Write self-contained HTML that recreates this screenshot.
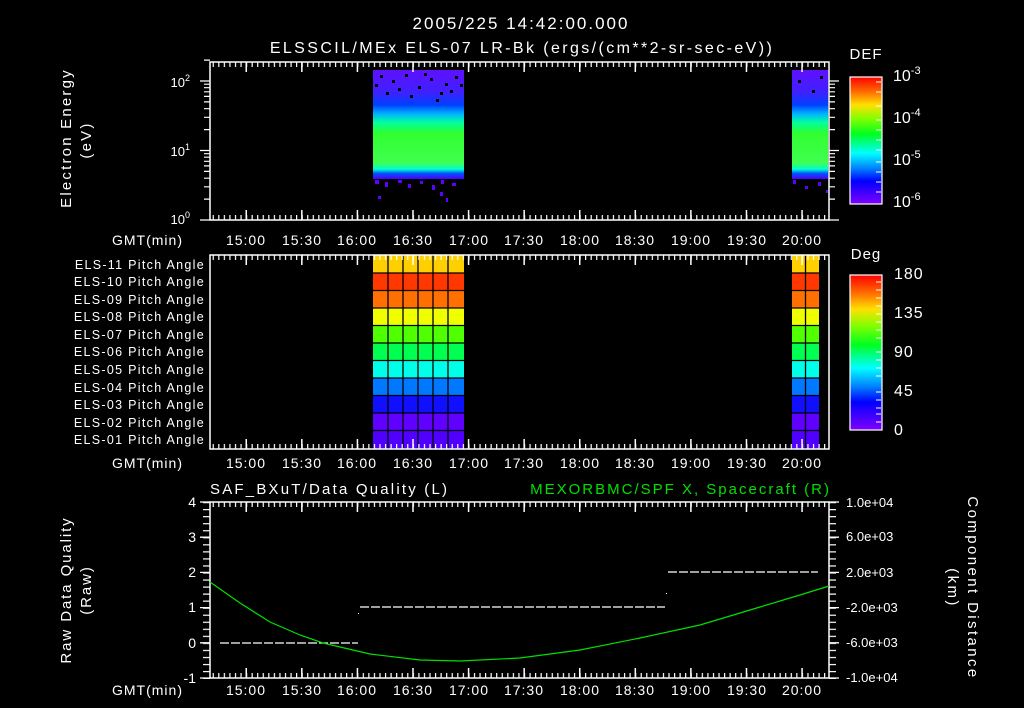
<!DOCTYPE html>
<html><head><meta charset="utf-8"><style>
html,body{margin:0;padding:0;background:#000;width:1024px;height:708px;overflow:hidden}
svg{display:block}
text{font-family:"Liberation Sans",sans-serif;fill:#fff}
</style></head><body>
<svg width="1024" height="708" viewBox="0 0 1024 708" xmlns="http://www.w3.org/2000/svg">
<defs>
<pattern id="mn" patternUnits="userSpaceOnUse" x="246" y="0" width="5.558" height="708"><rect width="1.2" height="708" fill="#fff"/></pattern>
<pattern id="mj" patternUnits="userSpaceOnUse" x="245.5" y="0" width="55.58" height="708"><rect width="1.5" height="708" fill="#fff"/></pattern>
<pattern id="yt" patternUnits="userSpaceOnUse" x="0" y="502" width="1024" height="7.04"><rect width="1024" height="1.2" fill="#fff"/></pattern>
<linearGradient id="spec" x1="0" y1="0" x2="0" y2="1">
<stop offset="0" stop-color="#6010ff"/><stop offset="0.2" stop-color="#4020ff"/>
<stop offset="0.32" stop-color="#0040ff"/><stop offset="0.4" stop-color="#00b0ff"/>
<stop offset="0.48" stop-color="#00ffa0"/><stop offset="0.58" stop-color="#30ff30"/>
<stop offset="0.85" stop-color="#40ff50"/><stop offset="0.91" stop-color="#00ffd0"/>
<stop offset="0.95" stop-color="#0050ff"/><stop offset="1" stop-color="#5000ff"/>
</linearGradient>
<linearGradient id="cb" x1="0" y1="0" x2="0" y2="1">
<stop offset="0" stop-color="#ff0000"/><stop offset="0.12" stop-color="#ff7000"/>
<stop offset="0.22" stop-color="#ffe000"/><stop offset="0.33" stop-color="#80ff00"/>
<stop offset="0.45" stop-color="#00ff20"/><stop offset="0.6" stop-color="#00ffff"/>
<stop offset="0.72" stop-color="#0080ff"/><stop offset="0.82" stop-color="#0000ff"/>
<stop offset="1" stop-color="#8000ff"/>
</linearGradient>
</defs>

<!-- titles -->
<text x="521" y="29" font-size="17" letter-spacing="2" text-anchor="middle">2005/225 14:42:00.000</text>
<text x="522" y="53" font-size="16" letter-spacing="2.4" text-anchor="middle">ELSSCIL/MEx ELS-07 LR-Bk  (ergs/(cm**2-sr-sec-eV))</text>

<!-- PANEL 1 -->
<rect x="373" y="70" width="91" height="109" fill="url(#spec)"/>
<rect x="792" y="70" width="36" height="109" fill="url(#spec)"/>
<g fill="#000">
<rect x="380" y="75" width="3" height="3"/><rect x="392" y="80" width="3" height="3"/><rect x="405" y="74" width="3" height="3"/><rect x="418" y="86" width="3" height="3"/><rect x="430" y="78" width="3" height="3"/><rect x="445" y="83" width="3" height="3"/><rect x="455" y="76" width="3" height="3"/><rect x="386" y="92" width="3" height="3"/><rect x="410" y="95" width="3" height="3"/><rect x="440" y="92" width="3" height="3"/><rect x="375" y="84" width="3" height="3"/><rect x="398" y="88" width="3" height="3"/><rect x="424" y="73" width="3" height="3"/><rect x="436" y="99" width="3" height="3"/><rect x="450" y="90" width="3" height="3"/><rect x="460" y="84" width="3" height="3"/><rect x="798" y="80" width="3" height="3"/><rect x="812" y="90" width="3" height="3"/><rect x="820" y="76" width="3" height="3"/>
</g>
<g fill="#6000ff">
<rect x="375" y="180" width="4" height="4"/><rect x="385" y="182" width="3" height="5"/><rect x="398" y="180" width="4" height="3"/><rect x="408" y="184" width="3" height="4"/><rect x="420" y="181" width="3" height="3"/><rect x="432" y="185" width="3" height="5"/><rect x="441" y="180" width="3" height="4"/><rect x="452" y="183" width="4" height="3"/><rect x="378" y="196" width="3" height="3"/><rect x="440" y="192" width="3" height="4"/><rect x="446" y="198" width="2" height="4"/><rect x="793" y="180" width="3" height="4"/><rect x="805" y="186" width="3" height="3"/><rect x="818" y="182" width="3" height="4"/><rect x="826" y="190" width="2" height="3"/>
</g>
<rect x="210" y="62" width="619" height="158" fill="none" stroke="#fff" stroke-width="1.5"/>
<rect x="210" y="62" width="619" height="5" fill="url(#mn)"/>
<rect x="210" y="62" width="619" height="10" fill="url(#mj)"/>
<rect x="210" y="215" width="619" height="5" fill="url(#mn)"/>
<rect x="210" y="210" width="619" height="10" fill="url(#mj)"/>
<g stroke="#fff" stroke-width="1.2">
<path d="M200 81H210M200 150.5H210M200 220H210"/>
<path d="M204 199.1H210M204 186.8H210M204 178.2H210M204 171.4H210M204 165.9H210M204 161.3H210M204 157.2H210M204 153.7H210M204 129.6H210M204 117.3H210M204 108.7H210M204 101.9H210M204 96.4H210M204 91.8H210M204 87.7H210M204 84.2H210M204 60.1H210"/>
<path d="M829 81H839M829 150.5H839M829 220H839"/>
<path d="M829 199.1H835M829 186.8H835M829 178.2H835M829 171.4H835M829 165.9H835M829 161.3H835M829 157.2H835M829 153.7H835M829 129.6H835M829 117.3H835M829 108.7H835M829 101.9H835M829 96.4H835M829 91.8H835M829 87.7H835M829 84.2H835"/>
</g>
<g font-size="13" text-anchor="end">
<text x="190" y="87">10<tspan font-size="9" dy="-6">2</tspan></text>
<text x="190" y="156">10<tspan font-size="9" dy="-6">1</tspan></text>
<text x="190" y="224">10<tspan font-size="9" dy="-6">0</tspan></text>
</g>
<text transform="translate(71,138) rotate(-90)" font-size="15" letter-spacing="2.2" text-anchor="middle">Electron Energy</text>
<text transform="translate(91,140) rotate(-90)" font-size="15" letter-spacing="2.2" text-anchor="middle">(eV)</text>
<g font-size="14" letter-spacing="1" text-anchor="middle">
<text x="183" y="245" text-anchor="end">GMT(min)</text>
<text x="246" y="245">15:00</text><text x="302" y="245">15:30</text><text x="357" y="245">16:00</text><text x="413" y="245">16:30</text><text x="469" y="245">17:00</text><text x="524" y="245">17:30</text><text x="580" y="245">18:00</text><text x="635" y="245">18:30</text><text x="691" y="245">19:00</text><text x="747" y="245">19:30</text><text x="802" y="245">20:00</text>
</g>
<!-- colorbar 1 -->
<text x="866" y="59" font-size="15" letter-spacing="1" text-anchor="middle">DEF</text>
<rect x="850" y="77" width="32" height="127" fill="url(#cb)" stroke="#fff" stroke-width="1.2"/>
<g stroke="#fff"><path d="M876 82H881M876 92H881M876 106H881M876 120H881M876 130H881M876 140H881M876 150H881M876 162H881M876 172H881M876 182H881M876 192H881"/></g>
<g font-size="16">
<text x="893" y="81">10<tspan font-size="11" dy="-7">-3</tspan></text>
<text x="893" y="123">10<tspan font-size="11" dy="-7">-4</tspan></text>
<text x="893" y="165">10<tspan font-size="11" dy="-7">-5</tspan></text>
<text x="893" y="207">10<tspan font-size="11" dy="-7">-6</tspan></text>
</g>

<!-- PANEL 2 -->
<g>
<rect x="373" y="255" width="91" height="18" fill="#ffd000"/>
<rect x="373" y="273" width="91" height="17.6" fill="#ff3800"/>
<rect x="373" y="290.5" width="91" height="17.6" fill="#ff7000"/>
<rect x="373" y="308" width="91" height="17.6" fill="#f0ff00"/>
<rect x="373" y="325.5" width="91" height="17.6" fill="#50ff00"/>
<rect x="373" y="343" width="91" height="17.6" fill="#00ff50"/>
<rect x="373" y="360.5" width="91" height="17.6" fill="#00ffe8"/>
<rect x="373" y="378" width="91" height="17.6" fill="#0078ff"/>
<rect x="373" y="395.5" width="91" height="17.6" fill="#1010ff"/>
<rect x="373" y="413" width="91" height="17.6" fill="#6000ff"/>
<rect x="373" y="430.5" width="91" height="18.5" fill="#5000ff"/>
</g>
<g>
<rect x="792" y="255" width="27" height="18" fill="#ffd000"/>
<rect x="792" y="273" width="27" height="17.6" fill="#ff3800"/>
<rect x="792" y="290.5" width="27" height="17.6" fill="#ff7000"/>
<rect x="792" y="308" width="27" height="17.6" fill="#f0ff00"/>
<rect x="792" y="325.5" width="27" height="17.6" fill="#50ff00"/>
<rect x="792" y="343" width="27" height="17.6" fill="#00ff50"/>
<rect x="792" y="360.5" width="27" height="17.6" fill="#00ffe8"/>
<rect x="792" y="378" width="27" height="17.6" fill="#0078ff"/>
<rect x="792" y="395.5" width="27" height="17.6" fill="#1010ff"/>
<rect x="792" y="413" width="27" height="17.6" fill="#6000ff"/>
<rect x="792" y="430.5" width="27" height="18.5" fill="#5000ff"/>
</g>
<g stroke="#000" stroke-width="1.3">
<path d="M373 273H464M373 290.5H464M373 308H464M373 325.5H464M373 343H464M373 360.5H464M373 378H464M373 395.5H464M373 413H464M373 430.5H464"/>
<path d="M388 255V449M403 255V449M418 255V449M433 255V449M448 255V449"/>
<path d="M792 273H819M792 290.5H819M792 308H819M792 325.5H819M792 343H819M792 360.5H819M792 378H819M792 395.5H819M792 413H819M792 430.5H819M805.5 255V449"/>
</g>
<rect x="210" y="255" width="619" height="194" fill="none" stroke="#fff" stroke-width="1.5"/>
<rect x="210" y="255" width="619" height="5" fill="url(#mn)"/>
<rect x="210" y="255" width="619" height="10" fill="url(#mj)"/>
<rect x="210" y="444" width="619" height="5" fill="url(#mn)"/>
<rect x="210" y="439" width="619" height="10" fill="url(#mj)"/>
<g font-size="12.5" letter-spacing="1.3" text-anchor="end">
<text x="205" y="269">ELS-11 Pitch Angle</text>
<text x="205" y="286">ELS-10 Pitch Angle</text>
<text x="205" y="304">ELS-09 Pitch Angle</text>
<text x="205" y="321">ELS-08 Pitch Angle</text>
<text x="205" y="339">ELS-07 Pitch Angle</text>
<text x="205" y="356">ELS-06 Pitch Angle</text>
<text x="205" y="374">ELS-05 Pitch Angle</text>
<text x="205" y="392">ELS-04 Pitch Angle</text>
<text x="205" y="409">ELS-03 Pitch Angle</text>
<text x="205" y="427">ELS-02 Pitch Angle</text>
<text x="205" y="444">ELS-01 Pitch Angle</text>
</g>
<g font-size="14" letter-spacing="1" text-anchor="middle">
<text x="183" y="468" text-anchor="end">GMT(min)</text>
<text x="246" y="468">15:00</text><text x="302" y="468">15:30</text><text x="357" y="468">16:00</text><text x="413" y="468">16:30</text><text x="469" y="468">17:00</text><text x="524" y="468">17:30</text><text x="580" y="468">18:00</text><text x="635" y="468">18:30</text><text x="691" y="468">19:00</text><text x="747" y="468">19:30</text><text x="802" y="468">20:00</text>
</g>
<!-- colorbar 2 -->
<text x="866" y="259" font-size="15" letter-spacing="1" text-anchor="middle">Deg</text>
<rect x="850" y="275" width="32" height="155" fill="url(#cb)" stroke="#fff" stroke-width="1.2"/>
<g stroke="#fff"><path d="M876 282H881M876 290H881M876 298H881M876 306H881M876 314H881M876 322H881M876 330H881M876 338H881M876 352H881M876 360H881M876 368H881M876 376H881M876 392H881M876 400H881M876 408H881M876 414H881M876 422H881"/></g>
<g font-size="16" letter-spacing="1">
<text x="894" y="279">180</text><text x="894" y="318">135</text><text x="894" y="357">90</text><text x="894" y="396">45</text><text x="894" y="435">0</text>
</g>

<!-- PANEL 3 -->
<text x="210" y="494" font-size="15" letter-spacing="2.2">SAF_BXuT/Data Quality (L)</text>
<text x="831" y="494" font-size="15" letter-spacing="2" text-anchor="end" style="fill:#00e000">MEXORBMC/SPF X, Spacecraft (R)</text>
<rect x="210" y="502" width="619" height="176" fill="none" stroke="#fff" stroke-width="1.5"/>
<rect x="210" y="502" width="619" height="5" fill="url(#mn)"/>
<rect x="210" y="502" width="619" height="10" fill="url(#mj)"/>
<rect x="210" y="673" width="619" height="5" fill="url(#mn)"/>
<rect x="210" y="668" width="619" height="10" fill="url(#mj)"/>
<rect x="203" y="502" width="7" height="177" fill="url(#yt)"/>
<rect x="829" y="502" width="7" height="177" fill="url(#yt)"/>
<g stroke="#fff" stroke-width="1.3"><path d="M200 502H210M200 537.2H210M200 572.4H210M200 607.6H210M200 642.8H210M200 678H210M829 502H839M829 537.2H839M829 572.4H839M829 607.6H839M829 642.8H839M829 678H839"/></g>
<g font-size="14" text-anchor="end">
<text x="196" y="507">4</text><text x="196" y="542">3</text><text x="196" y="577">2</text><text x="196" y="612">1</text><text x="196" y="648">0</text><text x="196" y="683">-1</text>
</g>
<g font-size="13">
<text x="846" y="507">1.0e+04</text><text x="846" y="541">6.0e+03</text><text x="846" y="577">2.0e+03</text><text x="846" y="612">-2.0e+03</text><text x="846" y="647">-6.0e+03</text><text x="846" y="682">-1.0e+04</text>
</g>
<text transform="translate(71,590) rotate(-90)" font-size="15" letter-spacing="1.9" text-anchor="middle">Raw Data Quality</text>
<text transform="translate(91,590) rotate(-90)" font-size="15" letter-spacing="1.9" text-anchor="middle">(Raw)</text>
<text transform="translate(968,588) rotate(90)" font-size="15" letter-spacing="2.4" text-anchor="middle">Component Distance</text>
<text transform="translate(948,588) rotate(90)" font-size="15" letter-spacing="2.4" text-anchor="middle">(km)</text>
<g stroke="#fff" stroke-width="1.2" stroke-dasharray="9 2" fill="none">
<path d="M220 643H358"/><path d="M360 607H665"/><path d="M668 572H818"/>
</g>
<rect x="358" y="613" width="1" height="1" fill="#fff"/><rect x="666" y="593" width="1" height="1" fill="#fff"/>
<polyline fill="none" stroke="#00e000" stroke-width="1.2" points="210,582 240,603 270,622 300,635 323,643 370,654 420,660 460,661 520,658 580,650 640,638 700,625 760,607 800,595 829,586"/>
<g font-size="14" letter-spacing="1" text-anchor="middle">
<text x="183" y="695" text-anchor="end">GMT(min)</text>
<text x="246" y="695">15:00</text><text x="302" y="695">15:30</text><text x="357" y="695">16:00</text><text x="413" y="695">16:30</text><text x="469" y="695">17:00</text><text x="524" y="695">17:30</text><text x="580" y="695">18:00</text><text x="635" y="695">18:30</text><text x="691" y="695">19:00</text><text x="747" y="695">19:30</text><text x="802" y="695">20:00</text>
</g>
</svg>
</body></html>
